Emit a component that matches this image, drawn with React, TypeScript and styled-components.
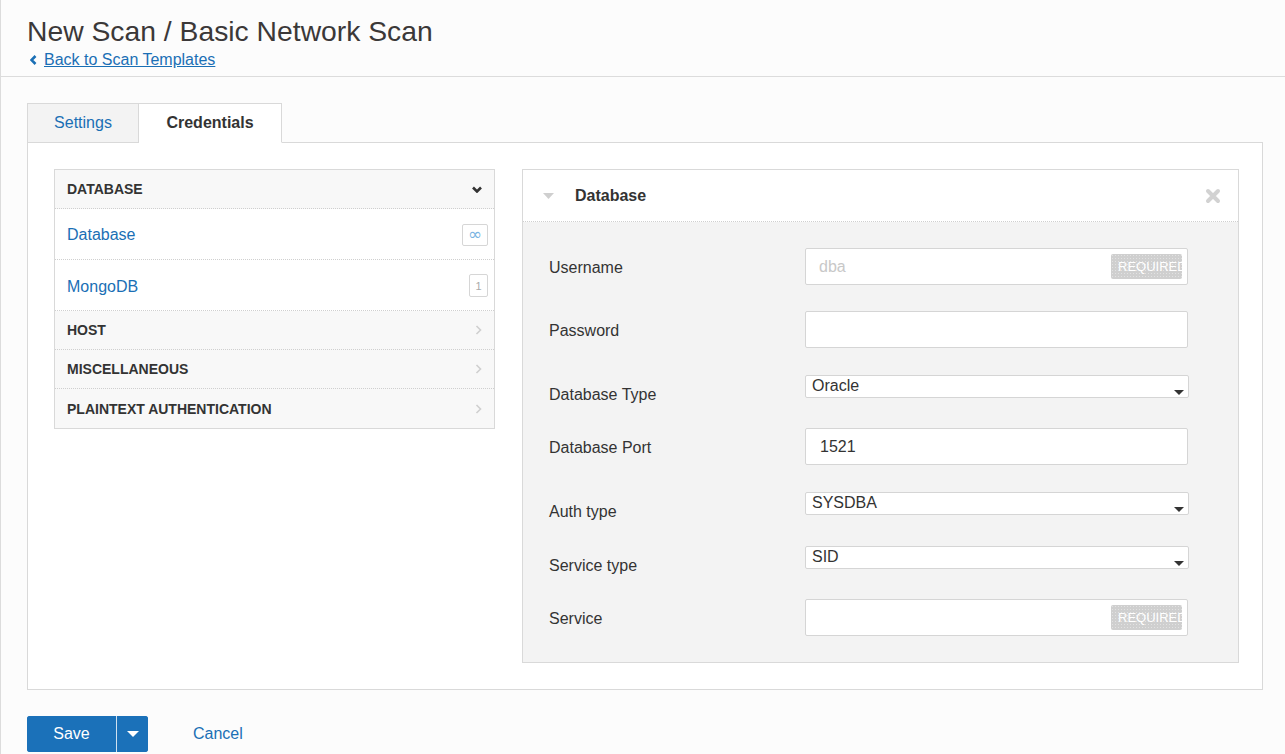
import React from "react";
import styled, { createGlobalStyle } from "styled-components";

const Global = createGlobalStyle`
  html, body { margin: 0; padding: 0; background: #fcfcfc; }
  body { font-family: "Liberation Sans", Arial, Helvetica, sans-serif; color: #333; }
  * { box-sizing: border-box; }
`;

const Page = styled.div`
  min-height: 754px;
  border-left: 1px solid #dcdcdc;
  overflow: hidden;
`;

const Header = styled.header`
  padding: 15px 26px 7px;
  border-bottom: 1px solid #dcdcdc;
`;

const Title = styled.h1`
  margin: 0;
  font-size: 28.3px;
  line-height: 32px;
  font-weight: normal;
  color: #3b3838;
`;

const BackLink = styled.a`
  margin-top: 4px;
  display: flex;
  align-items: center;
  gap: 7px;
  height: 18px;
  font-size: 16px;
  line-height: 18px;
  color: #1a6fb5;
  text-decoration: underline;
  padding-left: 3px;
`;

const Main = styled.main`
  padding: 26px 22px 0 26px;
`;

const Tabs = styled.div`
  display: flex;
  position: relative;
  z-index: 1;
`;

const Tab = styled.div<{ $active?: boolean }>`
  height: 40px;
  margin-bottom: -1px;
  display: flex;
  align-items: center;
  justify-content: center;
  font-size: 16px;
  border: 1px solid #d9d9d9;
  border-left-width: ${(p) => (p.$active ? 0 : 1)}px;
  border-bottom-color: ${(p) => (p.$active ? "#fff" : "#d9d9d9")};
  background: ${(p) => (p.$active ? "#fff" : "#f3f3f3")};
  color: ${(p) => (p.$active ? "#333" : "#1a6fb5")};
  font-weight: ${(p) => (p.$active ? "bold" : "normal")};
  width: ${(p) => (p.$active ? 143 : 112)}px;
`;

const ContentBox = styled.section`
  border: 1px solid #d9d9d9;
  background: #fff;
  padding: 26px;
  display: flex;
  align-items: flex-start;
  gap: 27px;
  height: 548px;
`;

const List = styled.div`
  width: 441px;
  border: 1px solid #d9d9d9;
  flex: none;
`;

const SectionRow = styled.div<{ $last?: boolean }>`
  height: 39px;
  padding: 0 12px;
  display: flex;
  align-items: center;
  justify-content: space-between;
  background: #f8f8f8;
  border-bottom: ${(p) => (p.$last ? "none" : "1px dotted #cfcfcf")};
  font-size: 14px;
  font-weight: bold;
  color: #333;
`;

const ItemRow = styled.div`
  height: 51px;
  padding: 1px 6px 0 12px;
  display: flex;
  align-items: center;
  justify-content: space-between;
  background: #fff;
  border-bottom: 1px dotted #cfcfcf;
  font-size: 16px;
  color: #1a6fb5;
`;

const ItemLabel = styled.span<{ $shift: number }>`
  padding-top: ${(p) => p.$shift}px;
`;

const CountBadge = styled.span<{ $w: number; $h: number }>`
  width: ${(p) => p.$w}px;
  height: ${(p) => p.$h}px;
  border: 1px solid #d6d6d6;
  border-radius: 2px;
  display: flex;
  align-items: center;
  justify-content: center;
  font-size: 11px;
  color: #aaa;
  background: #fff;
`;

const InfinityGlyph = styled.span`
  color: #7ab4e2;
  font-family: "DejaVu Sans", sans-serif;
  font-size: 17px;
  line-height: 1;
`;

const Panel = styled.div`
  width: 717px;
  flex: none;
  border: 1px solid #d9d9d9;
  background: #f3f3f3;
`;

const PanelHeader = styled.div`
  height: 52px;
  background: #fff;
  border-bottom: 1px dotted #cfcfcf;
  display: flex;
  align-items: center;
  padding: 0 17px 0 20px;
`;

const PanelTitle = styled.span`
  flex: 1;
  margin-left: 21px;
  font-size: 16px;
  font-weight: bold;
  color: #333;
`;

const PanelBody = styled.div`
  padding: 26px;
  display: flex;
  flex-direction: column;
  gap: 26px;
`;

const FormRow = styled.div<{ $select?: boolean }>`
  display: flex;
  align-items: flex-start;
  height: ${(p) => (p.$select ? 28 : 37)}px;
  padding-top: ${(p) => (p.$select ? 1 : 0)}px;
`;

const Label = styled.label`
  width: 256px;
  flex: none;
  font-size: 16px;
  line-height: 20px;
  padding-top: 10px;
  color: #333;
`;

const InputBox = styled.div`
  width: 383px;
  height: 37px;
  border: 1px solid #d5d5d5;
  border-radius: 2px;
  background: #fff;
  display: flex;
  align-items: center;
  padding: 0 5px 0 13px;
  font-size: 16px;
`;

const InputText = styled.span<{ $placeholder?: boolean }>`
  flex: 1;
  color: ${(p) => (p.$placeholder ? "#c8c8c8" : "#333")};
  padding-left: ${(p) => (p.$placeholder ? 0 : 1)}px;
`;

const Required = styled.span`
  width: 71px;
  height: 25px;
  overflow: hidden;
  white-space: nowrap;
  background-color: #cfcfcf;
  background-image: radial-gradient(#e2e2e2 0.6px, transparent 0.8px);
  background-size: 3px 3px;
  color: #fff;
  font-size: 13px;
  line-height: 25px;
  padding-left: 7px;
  border-radius: 2px;
`;

const SelectBox = styled.div`
  width: 384px;
  height: 23px;
  border: 1px solid #d5d5d5;
  border-radius: 2px;
  background: #fff;
  display: flex;
  justify-content: space-between;
  padding: 0 4px 0 6px;
  font-size: 16px;
  line-height: 20px;
  color: #333;
`;

const Caret = styled.span`
  align-self: flex-end;
  margin-bottom: 2px;
  width: 0;
  height: 0;
  border-left: 5px solid transparent;
  border-right: 5px solid transparent;
  border-top: 5px solid #333;
`;

const Actions = styled.div`
  margin-top: 26px;
  display: flex;
  align-items: center;
`;

const SaveGroup = styled.div`
  display: flex;
  height: 36px;
  border-radius: 3px;
  overflow: hidden;
  background: #1b71b9;
`;

const SaveBtn = styled.button`
  width: 90px;
  height: 36px;
  border: none;
  background: #1b71b9;
  color: #fff;
  font-family: inherit;
  font-size: 16px;
  padding: 0;
  border-right: 1px solid #cfe1f0;
`;

const DropBtn = styled.button`
  width: 31px;
  height: 36px;
  border: none;
  background: #1b71b9;
  display: flex;
  align-items: center;
  justify-content: center;
  padding: 0;
`;

const WhiteCaret = styled.span`
  width: 0;
  height: 0;
  border-left: 6px solid transparent;
  border-right: 6px solid transparent;
  border-top: 6px solid #fff;
`;

const CancelLink = styled.a`
  margin-left: 45px;
  font-size: 16px;
  color: #1a6fb5;
`;

const Chevron = ({ dir, color }: { dir: "down" | "right" | "left"; color: string }) => {
  const paths: Record<string, string> = {
    down: "M1 1.5 L5 5.5 L9 1.5",
    right: "M1.5 1 L5.5 5 L1.5 9",
    left: "M5.5 1 L1.5 5 L5.5 9",
  };
  const size = dir === "down" ? { w: 10, h: 7 } : { w: 7, h: 10 };
  return (
    <svg width={size.w} height={size.h} viewBox={`0 0 ${size.w} ${size.h}`}>
      <path d={paths[dir]} fill="none" stroke={color} strokeWidth={dir === "right" ? 1.6 : 2.6} />
    </svg>
  );
};

const sections = ["HOST", "MISCELLANEOUS", "PLAINTEXT AUTHENTICATION"];

export default function App() {
  return (
    <Page>
      <Global />
      <Header>
        <Title>New Scan / Basic Network Scan</Title>
        <BackLink>
          <Chevron dir="left" color="#1a6fb5" />
          Back to Scan Templates
        </BackLink>
      </Header>
      <Main>
        <Tabs>
          <Tab>Settings</Tab>
          <Tab $active>Credentials</Tab>
        </Tabs>
        <ContentBox>
          <List>
            <SectionRow>
              DATABASE
              <Chevron dir="down" color="#333" />
            </SectionRow>
            <ItemRow>
              <ItemLabel $shift={1}>Database</ItemLabel>
              <CountBadge $w={26} $h={22}>
                <InfinityGlyph>∞</InfinityGlyph>
              </CountBadge>
            </ItemRow>
            <ItemRow>
              <ItemLabel $shift={3}>MongoDB</ItemLabel>
              <CountBadge $w={19} $h={23}>1</CountBadge>
            </ItemRow>
            {sections.map((s, i) => (
              <SectionRow key={s} $last={i === sections.length - 1}>
                {s}
                <Chevron dir="right" color="#cfcfcf" />
              </SectionRow>
            ))}
          </List>
          <Panel>
            <PanelHeader>
              <svg width="11" height="6" viewBox="0 0 11 6">
                <path d="M0 0 H11 L5.5 6 Z" fill="#cfcfcf" />
              </svg>
              <PanelTitle>Database</PanelTitle>
              <svg width="16" height="16" viewBox="0 0 16 16">
                <path d="M3 3 L13 13 M13 3 L3 13" stroke="#d2d2d2" strokeWidth="4" strokeLinecap="round" />
              </svg>
            </PanelHeader>
            <PanelBody>
              <FormRow>
                <Label>Username</Label>
                <InputBox>
                  <InputText $placeholder>dba</InputText>
                  <Required>REQUIRED</Required>
                </InputBox>
              </FormRow>
              <FormRow>
                <Label>Password</Label>
                <InputBox />
              </FormRow>
              <FormRow $select>
                <Label>Database Type</Label>
                <SelectBox>
                  <span>Oracle</span>
                  <Caret />
                </SelectBox>
              </FormRow>
              <FormRow>
                <Label>Database Port</Label>
                <InputBox>
                  <InputText>1521</InputText>
                </InputBox>
              </FormRow>
              <FormRow $select>
                <Label>Auth type</Label>
                <SelectBox>
                  <span>SYSDBA</span>
                  <Caret />
                </SelectBox>
              </FormRow>
              <FormRow $select>
                <Label>Service type</Label>
                <SelectBox>
                  <span>SID</span>
                  <Caret />
                </SelectBox>
              </FormRow>
              <FormRow>
                <Label>Service</Label>
                <InputBox>
                  <InputText />
                  <Required>REQUIRED</Required>
                </InputBox>
              </FormRow>
            </PanelBody>
          </Panel>
        </ContentBox>
        <Actions>
          <SaveGroup>
            <SaveBtn>Save</SaveBtn>
            <DropBtn>
              <WhiteCaret />
            </DropBtn>
          </SaveGroup>
          <CancelLink>Cancel</CancelLink>
        </Actions>
      </Main>
    </Page>
  );
}
